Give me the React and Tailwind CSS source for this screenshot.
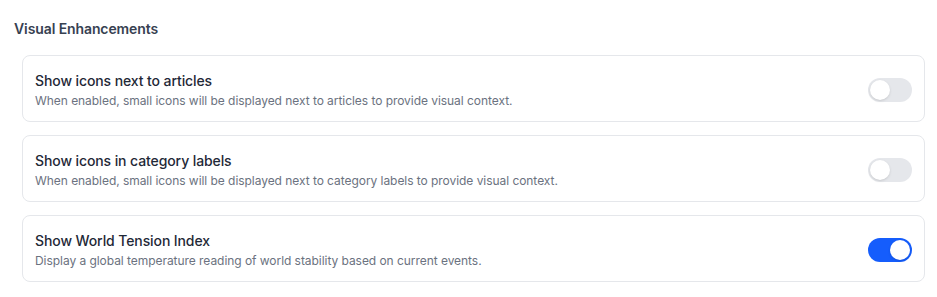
import React from "react";

const items = [
  {
    title: "Show icons next to articles",
    desc: "When enabled, small icons will be displayed next to articles to provide visual context.",
    on: false,
  },
  {
    title: "Show icons in category labels",
    desc: "When enabled, small icons will be displayed next to category labels to provide visual context.",
    on: false,
  },
  {
    title: "Show World Tension Index",
    desc: "Display a global temperature reading of world stability based on current events.",
    on: true,
  },
];

function Toggle({ on }) {
  return (
    <div
      className={
        on
          ? "relative h-6 w-11 shrink-0 rounded-full bg-[#155dfc]"
          : "relative h-6 w-11 shrink-0 rounded-full bg-[#e5e7eb]"
      }
    >
      <div
        className={
          on
            ? "absolute top-0.5 left-[22px] h-5 w-5 rounded-full bg-white shadow-sm"
            : "absolute top-0.5 left-0.5 h-5 w-5 rounded-full bg-white shadow-sm"
        }
      />
    </div>
  );
}

export default function App() {
  return (
    <div
      className="min-h-[297px] w-full bg-white pt-[19px] pl-[14px] pr-3"
      style={{ fontFamily: "Inter, 'Noto Sans', sans-serif" }}
    >
      <h2 className="text-sm leading-5 font-semibold tracking-[-0.1px] text-[#374151]">
        Visual Enhancements
      </h2>
      <div className="mt-4 ml-2 flex flex-col gap-[13px]">
        {items.map((it) => (
          <div
            key={it.title}
            className="flex items-center justify-between rounded-lg border border-[#e5e7eb] pt-[15px] pb-3 pl-3 pr-3"
          >
            <div className="flex flex-col gap-0.5">
              <div className="text-sm leading-5 font-medium tracking-[-0.1px] text-[#1f2937]">
                {it.title}
              </div>
              <div className="text-xs leading-4 tracking-[-0.05px] text-[#6b7280]">{it.desc}</div>
            </div>
            <Toggle on={it.on} />
          </div>
        ))}
      </div>
    </div>
  );
}
